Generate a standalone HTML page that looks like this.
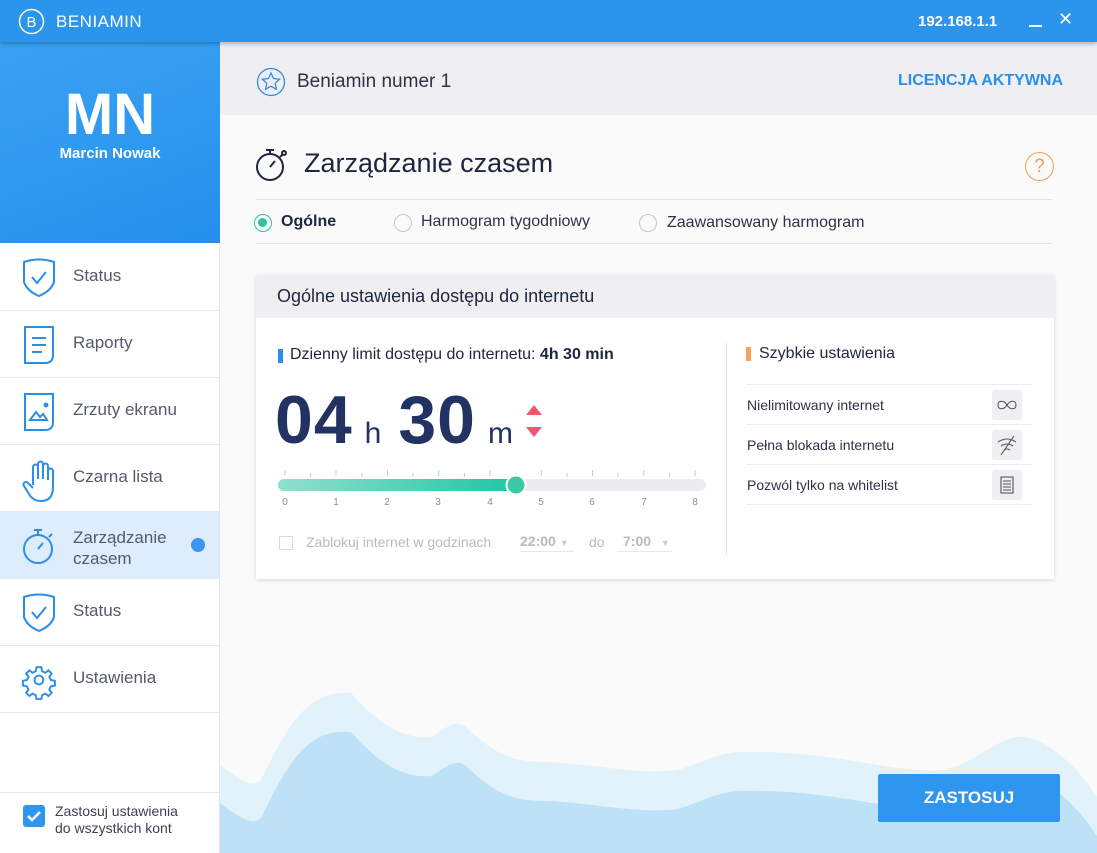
<!DOCTYPE html>
<html><head><meta charset="utf-8"><style>
*{box-sizing:border-box;margin:0;padding:0}
body{width:1097px;height:853px;overflow:hidden;font-family:"Liberation Sans",sans-serif;background:#fafafa;position:relative;color:#2d3345}
.abs{position:absolute}
.top{left:0;top:0;width:1097px;height:42px;background:#2b95ec;box-shadow:0 2px 4px rgba(0,0,0,.25);z-index:5}
.side{left:0;top:42px;width:220px;height:811px;background:#fff;border-right:1px solid #e6e6e6}
.sh{left:0;top:42px;width:220px;height:201px;background:linear-gradient(160deg,#3aa2f3,#2590ec)}
.nav{left:0;width:219px;height:67px;border-bottom:1px solid #e8e8ec;font-size:17px;color:#535a6b}
.nav span{position:absolute;left:73px;top:22px}
.nav svg{position:absolute;left:21px;top:14px}
.wave{left:220px;top:680px}
</style></head><body>
<div class="abs top">
 <svg class="abs" style="left:18px;top:8px" width="27" height="27" viewBox="0 0 27 27"><circle cx="13.5" cy="13.5" r="12" fill="none" stroke="#fff" stroke-width="1.5"/><text x="13.5" y="19" text-anchor="middle" font-size="15" fill="#fff" font-family="Liberation Sans">B</text></svg>
 <div class="abs" style="left:56px;top:12px;color:#fff;font-size:17px;letter-spacing:.5px">BENIAMIN</div>
 <div class="abs" style="left:918px;top:13px;color:#fff;font-size:15px;font-weight:bold">192.168.1.1</div>
 <div class="abs" style="left:1029px;top:25px;width:13px;height:2px;background:#fff"></div>
 <div class="abs" style="left:1058px;top:9px;color:#fff;font-size:18px">✕</div>
</div>
<div class="abs side"></div>
<div class="abs sh">
 <div class="abs" style="left:0;width:220px;top:42px;text-align:center;color:#fff;font-size:58px;font-weight:bold;line-height:62px">MN</div>
 <div class="abs" style="left:0;width:220px;top:103px;text-align:center;color:#fff;font-size:15px;font-weight:bold">Marcin Nowak</div>
</div>
<div class="abs nav" style="top:244px"><svg width="36" height="40" viewBox="0 0 36 40" fill="none" stroke="#2b8ee8" stroke-width="2"><path d="M3 4 Q18 -1 33 4 V24 Q30 33 18 38 Q6 33 3 24Z"/><path d="M11 19 l5 6 9 -11"/></svg><span>Status</span></div>
<div class="abs nav" style="top:311px"><svg width="36" height="40" viewBox="0 0 36 40" fill="none" stroke="#2b8ee8" stroke-width="2"><path d="M4 2 H32 V30 Q32 38 24 38 H4Z"/><path d="M11 13 H25 M11 20 H25 M11 27 H21"/></svg><span>Raporty</span></div>
<div class="abs nav" style="top:378px"><svg width="36" height="40" viewBox="0 0 36 40" fill="none" stroke="#2b8ee8" stroke-width="2"><path d="M4 2 H32 V30 Q32 38 24 38 H4Z"/><path d="M9 28 l6 -8 4 5 3 -3 4 6Z"/><circle cx="25" cy="13" r="1.5" fill="#2b8ee8"/></svg><span>Zrzuty ekranu</span></div>
<div class="abs nav" style="top:445px"><svg width="36" height="44" viewBox="0 0 36 44" fill="none" stroke="#2b8ee8" stroke-width="2"><path d="M12 26 V8 a2.5 2.5 0 0 1 5 0 V20 M17 20 V5 a2.5 2.5 0 0 1 5 0 V20 M22 20 V7 a2.5 2.5 0 0 1 5 0 V21 M27 21 V12 a2.5 2.5 0 0 1 5 0 V28 Q32 42 20 42 Q12 42 8 35 L3 27 a2.5 2.5 0 0 1 4 -3 L12 29"/></svg><span>Czarna lista</span></div>
<div class="abs nav" style="top:512px;background:#ddedfb"><svg width="36" height="40" viewBox="0 0 36 40" fill="none" stroke="#2b8ee8" stroke-width="2"><circle cx="17" cy="23" r="14"/><path d="M13 4 H21 M17 4 V9 M28 11 l3 -3 M17 23 l5 -6"/></svg><span style="top:15px;line-height:21px">Zarządzanie<br>czasem</span><div class="abs" style="left:191px;top:26px;width:14px;height:14px;border-radius:50%;background:#3a97f0"></div></div>
<div class="abs nav" style="top:579px"><svg width="36" height="40" viewBox="0 0 36 40" fill="none" stroke="#2b8ee8" stroke-width="2"><path d="M3 4 Q18 -1 33 4 V24 Q30 33 18 38 Q6 33 3 24Z"/><path d="M11 19 l5 6 9 -11"/></svg><span>Status</span></div>
<div class="abs nav" style="top:646px"><svg width="36" height="40" viewBox="0 0 36 40" fill="none" stroke="#2b8ee8" stroke-width="2"><g transform="translate(3.5 4) scale(.8)"><path d="M15 4 h6 l1 5 4 2 4 -3 4 4 -3 4 2 4 5 1 v6 l-5 1 -2 4 3 4 -4 4 -4 -3 -4 2 -1 5 h-6 l-1 -5 -4 -2 -4 3 -4 -4 3 -4 -2 -4 -5 -1 v-6 l5 -1 2 -4 -3 -4 4 -4 4 3 4 -2Z" stroke-width="2.4"/><circle cx="18" cy="20" r="5.5" stroke-width="2.4"/></g></svg><span>Ustawienia</span></div>
<div class="abs" style="left:0;top:792px;width:219px;height:1px;background:#e8e8ec"></div>
<div class="abs" style="left:23px;top:805px;width:22px;height:22px;border-radius:3px;background:#2f96ef"><svg width="22" height="22"><path d="M5 11 l4 4 8 -8" stroke="#fff" stroke-width="2.5" fill="none"/></svg></div>
<div class="abs" style="left:55px;top:803px;font-size:14px;line-height:17px;color:#3c4252">Zastosuj ustawienia<br>do wszystkich kont</div>

<div class="abs" style="left:220px;top:42px;width:877px;height:73px;background:#efeff1"></div>
<svg class="abs" style="left:256px;top:67px" width="30" height="30" viewBox="0 0 30 30" fill="none" stroke="#2b8ee8" stroke-width="1.3"><circle cx="15" cy="15" r="13.5"/><path d="M15 6 l2.6 5.5 6 .7 -4.4 4.1 1.2 5.9 -5.4 -3 -5.4 3 1.2 -5.9 -4.4 -4.1 6 -.7Z"/></svg>
<div class="abs" style="left:297px;top:71px;font-size:19px;color:#2d3345">Beniamin numer 1</div>
<div class="abs" style="left:898px;top:72px;font-size:16px;font-weight:bold;color:#2b8ee8">LICENCJA AKTYWNA</div>

<svg class="abs" style="left:254px;top:145px" width="36" height="38" viewBox="0 0 36 38" fill="none" stroke="#1e2540" stroke-width="2"><circle cx="16" cy="22" r="13"/><path d="M12 5 H20 M16 5 V9 M26 12 l3 -3 M16 22 l5 -6"/><circle cx="30" cy="8" r="2"/></svg>
<div class="abs" style="left:304px;top:148px;font-size:27px;color:#1e2540">Zarządzanie czasem</div>
<div class="abs" style="left:1025px;top:152px;width:29px;height:29px;border-radius:50%;border:1.3px solid #f0a050;color:#f0a050;text-align:center;font-size:19px;line-height:27px">?</div>
<div class="abs" style="left:256px;top:199px;width:796px;height:1px;background:#e3e3e6"></div>
<div class="abs" style="left:256px;top:243px;width:796px;height:1px;background:#e3e3e6"></div>
<div class="abs" style="left:254px;top:214px;width:18px;height:18px;border-radius:50%;border:1.5px solid #2ec4a0"><div style="margin:3px;width:9px;height:9px;border-radius:50%;background:#2ec4a0"></div></div>
<div class="abs" style="left:281px;top:213px;font-size:16px;font-weight:bold;color:#1e2540">Ogólne</div>
<div class="abs" style="left:394px;top:214px;width:18px;height:18px;border-radius:50%;border:1.5px solid #c4c6cc"></div>
<div class="abs" style="left:421px;top:213px;font-size:16px;color:#2d3345">Harmogram tygodniowy</div>
<div class="abs" style="left:639px;top:214px;width:18px;height:18px;border-radius:50%;border:1.5px solid #c4c6cc"></div>
<div class="abs" style="left:667px;top:214px;font-size:16px;color:#2d3345">Zaawansowany harmogram</div>

<svg class="abs wave" width="877" height="173" viewBox="220 680 877 173"><path d="M220 765 C240 780 255 790 262 778 C290 720 310 690 351 693 C375 720 400 740 432 737 C450 725 455 720 466 727 C500 760 520 762 550 762 C600 765 640 775 678 770 C710 760 720 750 756 752 C840 752 900 775 946 770 C980 760 1000 735 1024 737 C1050 740 1080 770 1097 797 V853 H220Z" fill="#e2f2fb"/><path d="M220 803 C240 818 255 828 262 816 C290 758 310 728 351 732 C375 759 400 779 432 776 C450 764 455 759 466 766 C500 799 520 801 550 801 C600 804 640 814 678 809 C710 799 720 789 756 791 C840 791 900 814 946 809 C980 799 1000 774 1024 776 C1050 779 1080 809 1097 836 V853 H220Z" fill="#bde2f8"/></svg>

<div class="abs" style="left:256px;top:275px;width:798px;height:304px;background:#fff;box-shadow:0 1px 4px rgba(0,0,0,.15)">
 <div style="height:43px;background:#efeff1;padding:11px 21px;font-size:18px;color:#1e2540">Ogólne ustawienia dostępu do internetu</div>
 <div class="abs" style="left:470px;top:68px;width:1px;height:212px;background:#e5e5e8"></div>
 <div class="abs" style="left:22px;top:74px;width:5px;height:14px;background:#2b8ee8"></div>
 <div class="abs" style="left:34px;top:71px;font-size:16px;color:#1e2540">Dzienny limit dostępu do internetu: <b>4h 30 min</b></div>
 <div class="abs" style="left:19px;top:105px;font-size:68px;color:#223263;font-weight:600;letter-spacing:1px;line-height:80px">04<span style="font-size:30px;font-weight:normal;margin:0 16px 0 12px">h</span>30<span style="font-size:30px;font-weight:normal;margin-left:12px">m</span></div>
 <svg class="abs" style="left:270px;top:130px" width="16" height="36"><path d="M8 0 L16 10 H0Z M0 22 H16 L8 32Z" fill="#f0566e"/></svg>
 <svg class="abs" style="left:20px;top:195px" width="432" height="40">
  <g stroke="#c8c9cf" stroke-width="1"><path d="M9 0v6M34.6 3v4M60 0v6M85.9 3v4M111.5 0v6M137 3v4M162.8 0v6M188.4 3v4M214 0v6M239.6 3v4M265.3 0v6M291 3v4M316.5 0v6M342 3v4M367.8 0v6M393.4 3v4M419 0v6"/></g>
  <rect x="2" y="9" width="428" height="12" rx="6" fill="#ececef"/>
  <defs><linearGradient id="g"><stop offset="0" stop-color="#8fe0cc"/><stop offset="1" stop-color="#1fc6a4"/></linearGradient></defs>
  <rect x="2" y="9" width="240" height="12" rx="6" fill="url(#g)"/>
  <circle cx="240" cy="15" r="9.5" fill="#3cc7a7" stroke="#fff" stroke-width="2"/>
  <g font-size="10" fill="#8a8e99" text-anchor="middle" font-family="Liberation Sans"><text x="9" y="35">0</text><text x="60" y="35">1</text><text x="111" y="35">2</text><text x="162" y="35">3</text><text x="214" y="35">4</text><text x="265" y="35">5</text><text x="316" y="35">6</text><text x="368" y="35">7</text><text x="419" y="35">8</text></g>
 </svg>
 <div class="abs" style="left:23px;top:261px;width:14px;height:14px;border:1.5px solid #d8d9dd"></div>
 <div class="abs" style="left:50px;top:259px;font-size:14px;color:#b8bac0">Zablokuj internet w godzinach</div>
 <div class="abs" style="left:264px;top:258px;width:54px;height:19px;border-bottom:1px solid #e8e8ea;font-size:14px;color:#b8bac0;font-weight:bold">22:00 <span style="font-size:9px;color:#ccc">▼</span></div>
 <div class="abs" style="left:333px;top:259px;font-size:14px;color:#b8bac0">do</div>
 <div class="abs" style="left:361px;top:258px;width:55px;height:19px;border-bottom:1px solid #e8e8ea;font-size:14px;color:#b8bac0;font-weight:bold;padding-left:6px">7:00 <span style="font-size:9px;color:#ccc;margin-left:6px">▼</span></div>
 <div class="abs" style="left:490px;top:72px;width:5px;height:14px;background:#f4a45a"></div>
 <div class="abs" style="left:503px;top:70px;font-size:16px;color:#1e2540">Szybkie ustawienia</div>
 <div class="abs" style="left:490px;top:109px;width:285px;border-top:1px solid #ececef"></div>
 <div class="abs" style="left:490px;top:149px;width:285px;border-top:1px solid #ececef"></div>
 <div class="abs" style="left:490px;top:189px;width:285px;border-top:1px solid #ececef"></div>
 <div class="abs" style="left:490px;top:229px;width:285px;border-top:1px solid #ececef"></div>
 <div class="abs" style="left:491px;top:122px;font-size:14px;color:#2d3345">Nielimitowany internet</div>
 <div class="abs" style="left:491px;top:162px;font-size:14px;color:#2d3345">Pełna blokada internetu</div>
 <div class="abs" style="left:491px;top:202px;font-size:14px;color:#2d3345">Pozwól tylko na whitelist</div>
 <div class="abs" style="left:736px;top:115px;width:30px;height:30px;border-radius:3px;background:#efeff2"><svg width="30" height="30" fill="none" stroke="#555" stroke-width="1.1"><path d="M15 15 C12 10 6 10 6 15 C6 20 12 20 15 15 C18 10 24 10 24 15 C24 20 18 20 15 15Z"/></svg></div>
 <div class="abs" style="left:736px;top:155px;width:30px;height:30px;border-radius:3px;background:#efeff2"><svg width="30" height="30" fill="none" stroke="#555" stroke-width="1.1"><path d="M6 12 Q15 6 24 12 M9 16 Q15 12 21 16 M12 20 Q15 18 18 20 M9 25 L22 6"/></svg></div>
 <div class="abs" style="left:736px;top:195px;width:30px;height:30px;border-radius:3px;background:#efeff2"><svg width="30" height="30" fill="none" stroke="#555" stroke-width="1.1"><rect x="9" y="7" width="12" height="16"/><path d="M11 11h8M11 14h8M11 17h8M11 20h8"/></svg></div>
</div>

<div class="abs" style="left:878px;top:774px;width:182px;height:48px;background:#2f96ef;border-radius:2px;color:#fff;font-weight:bold;font-size:17px;text-align:center;line-height:48px">ZASTOSUJ</div>
</body></html>
